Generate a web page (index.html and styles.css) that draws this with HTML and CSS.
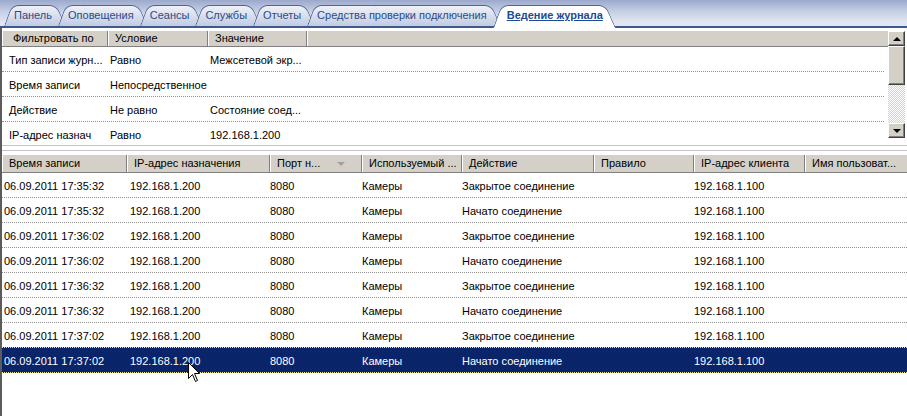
FILE: index.html
```html
<!DOCTYPE html>
<html lang="ru">
<head>
    <meta charset="UTF-8">
    <title>Ведение журнала</title>
    <link rel="stylesheet" href="styles.css">
</head>
<body>
    <div class="tabstrip">
        <div class="tab">Панель</div>
        <div class="tab">Оповещения</div>
        <div class="tab">Сеансы</div>
        <div class="tab">Службы</div>
        <div class="tab">Отчеты</div>
        <div class="tab">Средства проверки подключения</div>
        <div class="tab active">Ведение журнала</div>
    </div>

    <div class="content">
        <!-- Фильтр -->
        <div class="filter-panel">
            <div class="filter-list">
                <div class="list-head filter-cols">
                    <div class="hcell first">Фильтровать по</div>
                    <div class="hcell">Условие</div>
                    <div class="hcell">Значение</div>
                    <div class="hcell"></div>
                </div>
                <div class="frow filter-cols">
                    <div class="cell first">Тип записи журн...</div>
                    <div class="cell">Равно</div>
                    <div class="cell">Межсетевой экр...</div>
                </div>
                <div class="frow filter-cols">
                    <div class="cell first">Время записи</div>
                    <div class="cell">Непосредственное</div>
                    <div class="cell"></div>
                </div>
                <div class="frow filter-cols">
                    <div class="cell first">Действие</div>
                    <div class="cell">Не равно</div>
                    <div class="cell">Состояние соед...</div>
                </div>
                <div class="frow filter-cols">
                    <div class="cell first">IP-адрес назнач</div>
                    <div class="cell">Равно</div>
                    <div class="cell">192.168.1.200</div>
                </div>
            </div>
            <div class="scrollbar">
                <div class="sb-btn"><span class="arrow-up"></span></div>
                <div class="sb-thumb"></div>
                <div class="sb-track"></div>
                <div class="sb-btn"><span class="arrow-down"></span></div>
            </div>
        </div>

        <!-- Журнал -->
        <div class="log-list">
            <div class="list-head log-head log-cols">
                <div class="hcell">Время записи</div>
                <div class="hcell">IP-адрес назначения</div>
                <div class="hcell sorted">Порт н...<span class="sort-arrow"></span></div>
                <div class="hcell">Используемый ...</div>
                <div class="hcell">Действие</div>
                <div class="hcell">Правило</div>
                <div class="hcell">IP-адрес клиента</div>
                <div class="hcell">Имя пользоват...</div>
            </div>
            <div id="rows"></div>
        </div>
    </div>

    <svg class="cursor" width="13" height="21" viewBox="0 0 13 21">
        <path d="M0.5 0.5 L0.5 16.5 L4.5 12.5 L7.5 19.5 L9.5 18.5 L6.5 11.5 L11.5 11.5 Z" fill="#fff" stroke="#000" stroke-width="1"/>
    </svg>

    <script>
        const entries = [
            ['06.09.2011 17:35:32', 'Закрытое соединение'],
            ['06.09.2011 17:35:32', 'Начато соединение'],
            ['06.09.2011 17:36:02', 'Закрытое соединение'],
            ['06.09.2011 17:36:02', 'Начато соединение'],
            ['06.09.2011 17:36:32', 'Закрытое соединение'],
            ['06.09.2011 17:36:32', 'Начато соединение'],
            ['06.09.2011 17:37:02', 'Закрытое соединение'],
            ['06.09.2011 17:37:02', 'Начато соединение']
        ];

        const rows = document.getElementById('rows');
        entries.forEach((e, i) => {
            const row = document.createElement('div');
            row.className = 'row log-cols' + (i === entries.length - 1 ? ' selected' : '');
            const cells = [e[0], '192.168.1.200', '8080', 'Камеры', e[1], '', '192.168.1.100', ''];
            cells.forEach(text => {
                const c = document.createElement('div');
                c.className = 'cell';
                c.textContent = text;
                row.appendChild(c);
            });
            rows.appendChild(row);
        });
    </script>
</body>
</html>
```

FILE: styles.css
```css
* {
    margin: 0;
    padding: 0;
    box-sizing: border-box;
}

body {
    width: 907px;
    height: 416px;
    overflow: hidden;
    background: #fff;
    font-family: 'Liberation Sans', Arial, sans-serif;
    font-size: 11px;
    color: #000;
    position: relative;
}

/* Вкладки */
.tabstrip {
    height: 28px;
    display: flex;
    align-items: flex-end;
    padding-left: 4px;
    background: linear-gradient(to bottom, #9ca9cc 0%, #c6cfe5 45%, #e2e6f1 85%);
    border-bottom: 2px solid #3d5a8d;
}

.tab {
    position: relative;
    z-index: 0;
    height: 21px;
    line-height: 21px;
    padding: 0 14px 0 10px;
    margin-right: -8px;
    color: #2a4c85;
    white-space: nowrap;
}

.tab::before,
.tab::after {
    content: '';
    position: absolute;
    top: 0;
    bottom: 0;
    width: 60%;
    border: 1px solid #4e6595;
    border-bottom: none;
    background: linear-gradient(to bottom, #eef1f8, #c2cbe2);
    z-index: -1;
}

.tab::before {
    left: 0;
    border-right: none;
    border-radius: 7px 0 0 0;
    transform: skewX(-20deg);
    transform-origin: bottom left;
}

.tab::after {
    right: 0;
    border-left: none;
    border-radius: 0 7px 0 0;
    transform: skewX(24deg);
    transform-origin: bottom right;
}

.tab.active {
    z-index: 1;
    height: 23px;
    margin-bottom: -2px;
    padding: 0 14px 2px 14px;
    font-weight: bold;
    text-decoration: underline;
    color: #1d4b93;
}

.tab.active::before,
.tab.active::after {
    background: #fff;
}

/* Содержимое */
.content {
    border-left: 2px solid #5c5c5c;
    height: 388px;
    padding-top: 3px;
}

.list-head {
    display: grid;
    height: 16px;
    background: #d4d0c8;
    border-bottom: 1px solid #808080;
}

.hcell {
    line-height: 15px;
    padding-left: 6px;
    border-left: 1px solid #fff;
    border-right: 1px solid #808080;
    white-space: nowrap;
    overflow: hidden;
}

.hcell:last-child {
    border-right: none;
}

.cell {
    padding-left: 2px;
    white-space: nowrap;
    overflow: hidden;
}

/* Панель фильтра */
.filter-panel {
    display: flex;
    height: 115px;
    border-bottom: 1px solid #c4c4c4;
}

.filter-list {
    flex: 1;
    overflow: hidden;
}

.filter-cols {
    grid-template-columns: 106px 100px 99px 1fr;
}

.list-head .hcell.first {
    padding-left: 10px;
}

.frow {
    display: grid;
    height: 25px;
    line-height: 26px;
    border-bottom: 1px dotted #909090;
    margin-right: 4px;
}

.frow .cell.first {
    padding-left: 7px;
}

.scrollbar {
    width: 17px;
    margin-right: 2px;
    height: 107px;
    display: flex;
    flex-direction: column;
}

.sb-btn,
.sb-thumb {
    background: #d4d0c8;
    border: 1px solid;
    border-color: #fff #404040 #404040 #fff;
    box-shadow: inset -1px -1px 0 #808080;
}

.sb-btn {
    height: 15px;
    display: flex;
    align-items: center;
    justify-content: center;
}

.sb-thumb {
    height: 39px;
}

.sb-track {
    flex: 1;
    background: repeating-conic-gradient(#fff 0 25%, #d4d0c8 0 50%) 0 0 / 2px 2px;
}

.arrow-up,
.arrow-down {
    width: 0;
    height: 0;
    border-left: 4px solid transparent;
    border-right: 4px solid transparent;
}

.arrow-up {
    border-bottom: 4px solid #000;
}

.arrow-down {
    border-top: 4px solid #000;
}

/* Список журнала */
.log-list {
    margin-top: 4px;
    border-top: 1px solid #c4c4c4;
    padding-top: 4px;
}

.log-head {
    height: 18px;
}

.log-head .hcell {
    line-height: 17px;
}

.log-cols {
    grid-template-columns: 125px 143px 92px 100px 132px 100px 111px 100px;
}

.sorted {
    position: relative;
}

.sort-arrow {
    position: absolute;
    left: 66px;
    top: 7px;
    border-left: 4px solid transparent;
    border-right: 4px solid transparent;
    border-top: 4px solid #a0a0a0;
}

.row {
    display: grid;
    height: 25px;
    line-height: 26px;
    border-bottom: 1px dotted #909090;
}

.row .cell:nth-child(2) {
    padding-left: 3px;
}

.row .cell:nth-child(3),
.row .cell:nth-child(4),
.row .cell:nth-child(5),
.row .cell:nth-child(7) {
    padding-left: 0;
}

.row.selected {
    margin-top: -1px;
    height: 26px;
    background: #0a246a;
    color: #fff;
    border-top: 1px dotted #e8e0a0;
    border-bottom: 1px dotted #e8e0a0;
}

.cursor {
    position: absolute;
    left: 188px;
    top: 362px;
}
```
